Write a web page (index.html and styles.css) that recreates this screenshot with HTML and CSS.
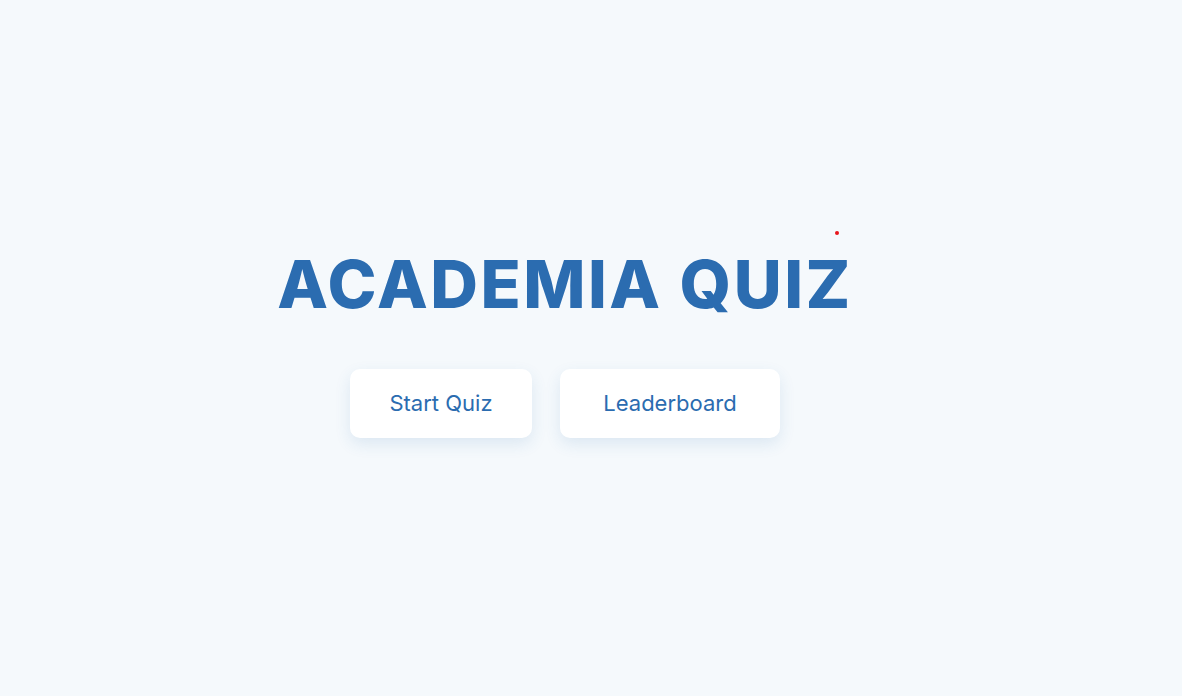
FILE: index.html
```html
<!DOCTYPE html>
<html>
<head>
<meta charset="utf-8">
<link rel="stylesheet" href="styles.css">
</head>
<body>
<main class="home">
  <h1 class="title">ACADEMIA QUIZ<span class="dot"></span></h1>
  <div class="actions">
    <button class="btn btn-start">Start Quiz</button>
    <button class="btn btn-board">Leaderboard</button>
  </div>
</main>
</body>
</html>
```
FILE: styles.css
```css
html, body {
  margin: 0;
  padding: 0;
  height: 100%;
}
body {
  background: #f5f9fc;
  font-family: Inter, "Liberation Sans", sans-serif;
}
.home {
  height: 100%;
  display: flex;
  flex-direction: column;
  align-items: center;
  justify-content: center;
  padding-right: 52px;
  padding-bottom: 8px;
  box-sizing: border-box;
}
.title {
  position: relative;
  margin: 0 0 52px;
  font-size: 66px;
  font-weight: 800;
  letter-spacing: 2.5px;
  color: #2b6cb0;
  line-height: 1;
}
.dot {
  position: absolute;
  right: 14px;
  top: -20px;
  width: 4px;
  height: 4px;
  border-radius: 50%;
  background: #e8151b;
}
.actions {
  display: flex;
  gap: 28px;
}
.btn {
  height: 69px;
  border: none;
  border-radius: 10px;
  background: #ffffff;
  color: #2b6cb0;
  font-family: Inter, "Liberation Sans", sans-serif;
  font-size: 22px;
  font-weight: 400;
  box-shadow: 0 6px 16px rgba(43, 108, 176, 0.12);
  cursor: pointer;
}
.btn-start {
  width: 182px;
}
.btn-board {
  width: 220px;
}
```
